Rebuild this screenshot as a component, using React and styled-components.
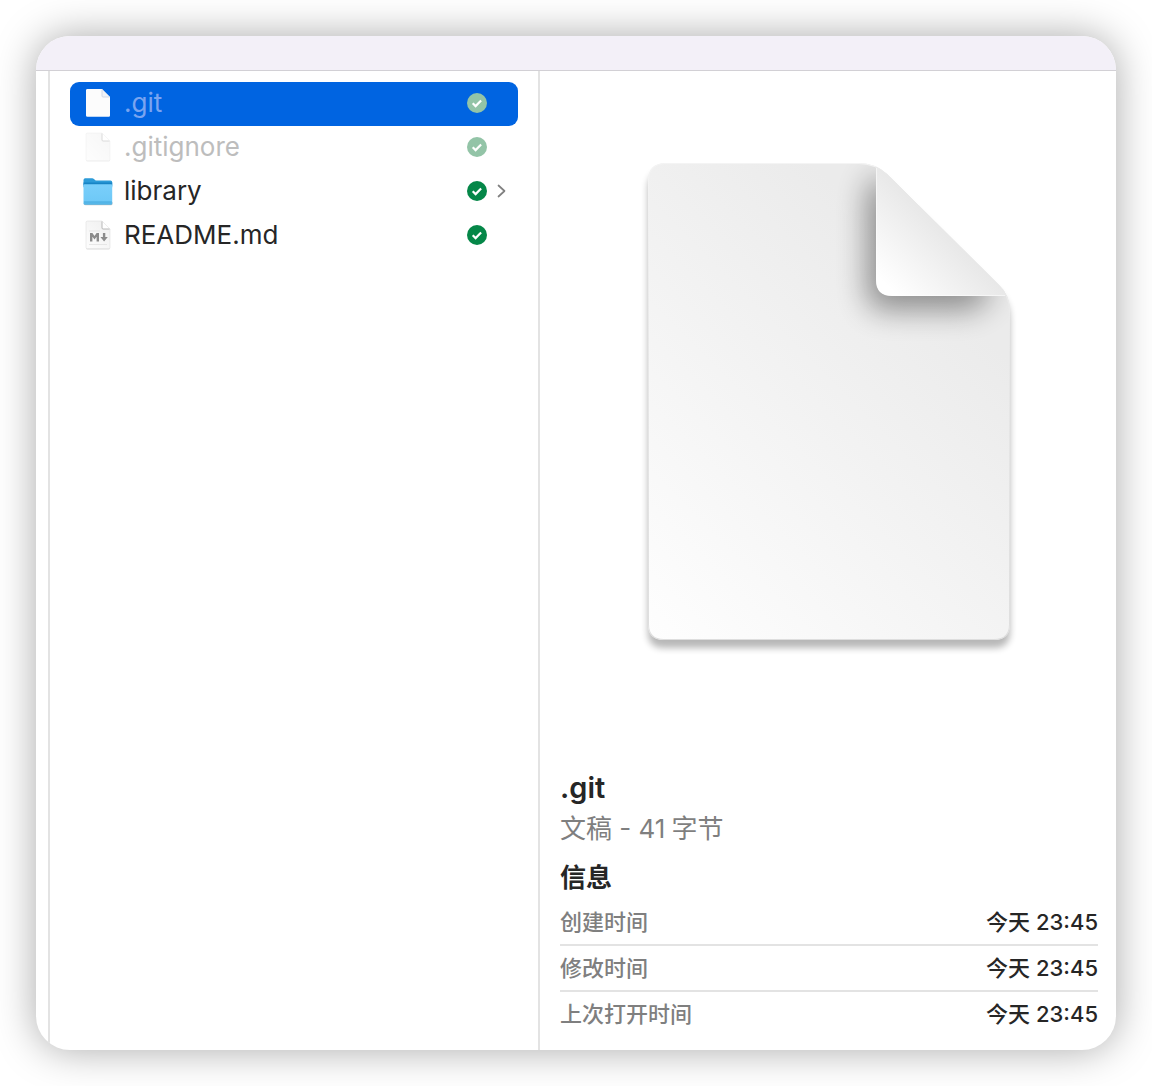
import React, { useState } from "react";
import styled, { createGlobalStyle } from "styled-components";

const GlobalStyle = createGlobalStyle`
  *, *::before, *::after { box-sizing: border-box; }
  body {
    margin: 0;
    background: #fff;
    color: #262626;
    font-family: Inter, "Noto Sans CJK SC", sans-serif;
  }
`;

const Desktop = styled.main`
  display: flex;
  min-height: 100vh;
  padding: 36px;
`;

const Window = styled.section`
  flex: 1;
  display: flex;
  flex-direction: column;
  min-width: 0;
  overflow: hidden;
  border-radius: 34px;
  background: #fff;
  box-shadow: 0 0 40px rgba(0, 0, 0, 0.34);
`;

const TitleBar = styled.header`
  height: 35px;
  background: #f3f0f8;
  border-bottom: 1px solid #d2d0d5;
`;

const Columns = styled.div`
  flex: 1;
  display: grid;
  grid-template-columns: 14px 490px minmax(0, 1fr);
`;

const Column = styled.div`
  border-right: 2px solid #e3e3e3;
`;

const FileColumn = styled(Column).attrs({ as: "nav" })`
  padding: 11px 20px;
`;

const FileList = styled.ul`
  margin: 0;
  padding: 0;
  list-style: none;
`;

const FileRow = styled.button`
  display: flex;
  align-items: center;
  gap: 10px;
  width: 100%;
  height: 44px;
  padding: 0 11px 2px 12px;
  border: 0;
  border-radius: 9px;
  background: ${(p) => (p.$selected ? "#0064e1" : "transparent")};
  color: ${(p) => (p.$selected ? (p.$hidden ? "#7aa4f0" : "#fff") : p.$hidden ? "#bdbdbd" : "#262626")};
  font: inherit;
  font-size: 26px;
  line-height: 32px;
  text-align: left;
`;

const FileName = styled.span`
  flex: 1;
`;

const RowIcon = styled.svg`
  flex: none;
  width: 32px;
  height: 32px;
  overflow: visible;
  opacity: ${(p) => (p.$faded ? 0.5 : 1)};
`;

const Badge = styled.svg`
  flex: none;
  width: 20px;
  height: 20px;
`;

const Arrow = styled.svg`
  flex: none;
  width: 10px;
  height: 14px;
`;

const Details = styled.article`
  display: flex;
  flex-direction: column;
  padding: 0 18px 12px 20px;
`;

const Preview = styled.div`
  flex: 1;
  display: flex;
  align-items: center;
  justify-content: center;
  padding: 0 0 20px;
`;

const PreviewArt = styled.svg`
  width: 400px;
  height: 540px;
`;

const Title = styled.h1`
  margin: 0;
  font-size: 29px;
  font-weight: 600;
  line-height: 40px;
`;

const Kind = styled.p`
  display: flex;
  gap: 6px;
  margin: 0;
  color: #7f7f7f;
  font-size: 26px;
  line-height: 42px;
`;

const SectionTitle = styled.h2`
  margin: 0;
  padding: 8px 0 2px;
  font-size: 26px;
  font-weight: 700;
  line-height: 40px;
`;

const InfoList = styled.dl`
  margin: 0;
`;

const InfoRow = styled.div`
  display: flex;
  align-items: center;
  justify-content: space-between;
  height: 46px;
  border-bottom: 2px solid #e3e3e3;
  font-size: 22px;
  font-weight: 500;
  line-height: 32px;

  &:last-child { border-bottom-color: transparent; }
`;

const InfoLabel = styled.dt`
  color: #7f7f7f;
`;

const InfoValue = styled.dd`
  margin: 0;
`;

function PageIcon({ faded, selected, markdown }) {
  return (
    <RowIcon viewBox="0 0 32 32" $faded={faded} aria-hidden="true">
      <defs>
        <linearGradient id="pageFill" x1="0" y1="1" x2="1" y2="0">
          <stop offset="0" stopColor="#fdfdfd" />
          <stop offset="1" stopColor="#efefef" />
        </linearGradient>
      </defs>
      {!selected && (
        <path d="M5.500 2.500h14.500l8 8v18.500q0 1.500-1.500 1.500h-21q-1.500 0-1.500-1.500v-25q0-1.500 1.500-1.500z" fill="#000" opacity=".13" />
      )}
      <path
        d="M5.500 2h14.500l8 8v18.500q0 1.200-1.200 1.200h-21.300q-1.500 0-1.500-1.200v-25.300q0-1.200 1.500-1.200z"
        fill={selected ? "#fcfcfc" : "url(#pageFill)"}
        stroke={selected ? "none" : "#d9d9d9"}
        strokeWidth=".5"
      />
      <path d="M20 2.300v6.700q0 1 1 1h6.800z" fill={selected ? "#f1f3f7" : "#fff"} />
      <path d="M20 2.500v6.500q0 1 1 1h6.500" fill="none" stroke={selected ? "#d0d6e2" : "#b0b0b0"} strokeWidth=".9" />
      {markdown && (
        <g>
          <path d="M7 12h11M7 25.500h18" stroke="#dedede" strokeWidth=".7" />
          <path d="M8 22.500v-8.500h2.400l2.100 3.100 2.100-3.100h2.400v8.500h-2.400v-4.800l-2.100 2.900-2.100-2.900v4.800z" fill="#8b8b8b" />
          <path d="M20.900 14h2.400v4h2.500l-3.700 4.500-3.700-4.500h2.500z" fill="#8b8b8b" />
        </g>
      )}
    </RowIcon>
  );
}

function FolderIcon() {
  return (
    <RowIcon viewBox="0 0 32 32" aria-hidden="true">
      <defs>
        <linearGradient id="folderFront" x1="0" y1="0" x2="0" y2="1">
          <stop offset="0" stopColor="#7acffb" />
          <stop offset=".8" stopColor="#6fc9f7" />
          <stop offset="1" stopColor="#4bafe2" />
        </linearGradient>
      </defs>
      <path d="M2 27v2q0 1.300 1.500 1.300h25.500q1.500 0 1.500-1.300v-2z" fill="#000" opacity=".22" />
      <path d="M1.500 5q0-1.800 1.700-1.800h7q1 0 1.700.7l1.800 1.600h14.800q1.700 0 1.700 1.700v5h-28.700z" fill="#2c9bd8" />
      <path d="M1.500 7.500h28.700v3h-28.700z" fill="#1784c5" />
      <path d="M1.500 10.200q0-1 1.200-1h26.300q1.200 0 1.200 1v18q0 1.500-1.500 1.500h-25.700q-1.500 0-1.500-1.500z" fill="url(#folderFront)" />
      <path d="M2 27h27.700" stroke="#42a7dc" strokeWidth=".8" />
    </RowIcon>
  );
}

function SyncedBadge({ faded }) {
  return (
    <Badge viewBox="0 0 20 20" role="img" aria-label="Synced">
      <circle cx="10" cy="10" r="10" fill={faded ? "#93c4a7" : "#058748"} />
      <path d="M5.700 10.300l2.900 2.800 5.500-5.600" fill="none" stroke="#fff" strokeWidth="2.200" />
    </Badge>
  );
}

function Chevron({ visible }) {
  return (
    <Arrow viewBox="0 0 10 14" aria-hidden="true">
      {visible && <path d="M1.500 1.500l6 5.500-6 5.500" fill="none" stroke="#808080" strokeWidth="1.700" strokeLinecap="round" strokeLinejoin="round" />}
    </Arrow>
  );
}

function DocumentArt() {
  const page =
    "M37 23H230Q246 23 258 34L370 145Q381 155 381 171V484Q381 500 365 500H35Q19 500 19 484V41Q19 23 37 23Z";
  return (
    <PreviewArt viewBox="0 0 400 540" aria-hidden="true">
      <defs>
        <linearGradient id="sheet" gradientUnits="userSpaceOnUse" x1="19" y1="500" x2="340" y2="180">
          <stop offset="0" stopColor="#fefefe" />
          <stop offset="1" stopColor="#ebebeb" />
        </linearGradient>
        <linearGradient id="flap" gradientUnits="userSpaceOnUse" x1="258" y1="146" x2="314" y2="90">
          <stop offset="0" stopColor="#fff" />
          <stop offset="1" stopColor="#e8e8e8" />
        </linearGradient>
        <linearGradient id="edge" x1="0" y1="0" x2="0" y2="1">
          <stop offset="0" stopColor="#f4f4f4" />
          <stop offset=".4" stopColor="#e8e8e8" />
          <stop offset="1" stopColor="#dedede" />
        </linearGradient>
        <filter id="drop" x="-10%" y="-10%" width="120%" height="120%">
          <feGaussianBlur stdDeviation="3.500" />
        </filter>
        <filter id="flapShade" x="-60%" y="-60%" width="220%" height="220%">
          <feGaussianBlur stdDeviation="15" />
        </filter>
        <clipPath id="sheetClip"><path d={page} /></clipPath>
      </defs>
      <path d={page} transform="translate(0 8)" fill="#000" opacity=".28" filter="url(#drop)" />
      <path d={page} fill="url(#sheet)" />
      <g clipPath="url(#sheetClip)">
        <path d="M238 54V152Q238 170 256 170H344L366 152L248 32Z" fill="#000" opacity=".4" filter="url(#flapShade)" />
        <path d={page} fill="none" stroke="url(#edge)" strokeWidth="2" />
        <path d="M247 20V140Q247 156 263 156H381Z" fill="url(#flap)" />
        <path d="M247.500 28V140Q247.500 155.500 263 155.500H376" fill="none" stroke="#fff" strokeOpacity=".5" />
      </g>
    </PreviewArt>
  );
}

const files = [
  { name: ".git", hidden: true },
  { name: ".gitignore", hidden: true },
  { name: "library", folder: true },
  { name: "README.md", markdown: true },
];

const info = [
  ["创建时间", "今天 23:45"],
  ["修改时间", "今天 23:45"],
  ["上次打开时间", "今天 23:45"],
];

export default function App() {
  const [selected, setSelected] = useState(".git");
  return (
    <>
      <GlobalStyle />
      <Desktop>
        <Window>
          <TitleBar />
          <Columns>
            <Column />
            <FileColumn>
              <FileList>
                {files.map((f) => {
                  const active = f.name === selected;
                  return (
                    <li key={f.name}>
                      <FileRow type="button" $selected={active} $hidden={f.hidden} onClick={() => setSelected(f.name)}>
                        {f.folder ? <FolderIcon /> : <PageIcon selected={active} faded={f.hidden && !active} markdown={f.markdown} />}
                        <FileName>{f.name}</FileName>
                        <SyncedBadge faded={f.hidden} />
                        <Chevron visible={f.folder} />
                      </FileRow>
                    </li>
                  );
                })}
              </FileList>
            </FileColumn>
            <Details>
              <Preview>
                <DocumentArt />
              </Preview>
              <Title>.git</Title>
              <Kind>
                <span>文稿 - 41</span>
                <span>字节</span>
              </Kind>
              <SectionTitle>信息</SectionTitle>
              <InfoList>
                {info.map(([label, value]) => (
                  <InfoRow key={label}>
                    <InfoLabel>{label}</InfoLabel>
                    <InfoValue>{value}</InfoValue>
                  </InfoRow>
                ))}
              </InfoList>
            </Details>
          </Columns>
        </Window>
      </Desktop>
    </>
  );
}
